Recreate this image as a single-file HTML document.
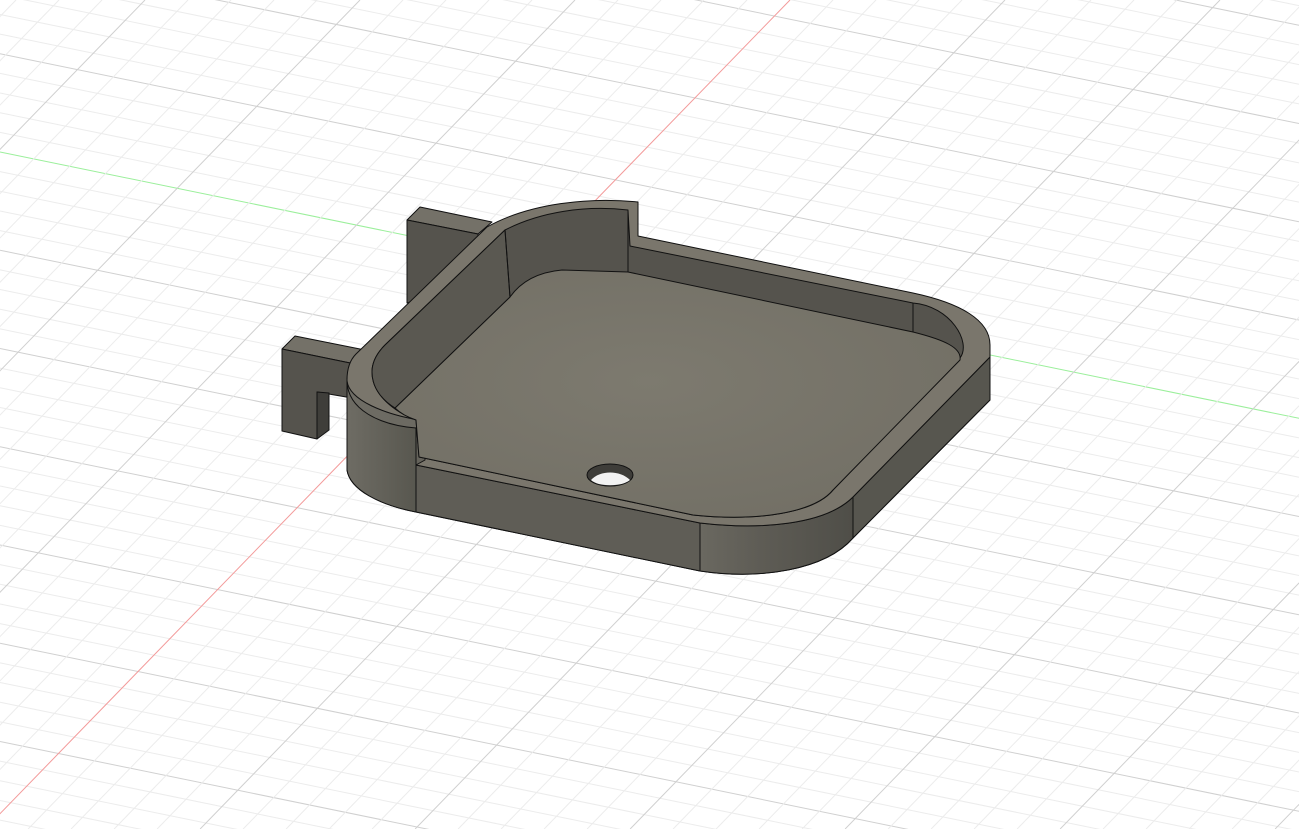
<!DOCTYPE html>
<html><head><meta charset="utf-8"><style>
html,body{margin:0;padding:0;background:#fff;width:1299px;height:829px;overflow:hidden}
svg{display:block;position:absolute;left:0;top:0}
</style></head><body>
<svg id="s" width="1299" height="829" viewBox="0 0 1299 829" xmlns="http://www.w3.org/2000/svg">
<defs>
<radialGradient id="fl" cx="0.45" cy="0.45" r="0.7">
<stop offset="0" stop-color="#7d7a6f"/><stop offset="1" stop-color="#716e64"/></radialGradient>
<linearGradient id="fw" x1="0" y1="0" x2="1" y2="0">
<stop offset="0" stop-color="#6e6c64"/><stop offset="1" stop-color="#58574f"/></linearGradient>
<linearGradient id="cw" x1="0" y1="0" x2="1" y2="0">
<stop offset="0" stop-color="#6a6860"/><stop offset="0.4" stop-color="#5e5c55"/><stop offset="1" stop-color="#4f4e48"/></linearGradient>
</defs>
<g id="grid"></g>
<g stroke="#111" stroke-width="1" stroke-linejoin="round">
<path d="M407,220 L420,207 L492,222 L478,234 Z" fill="#747168"/>
<path d="M407,220 L478,234 L478,260 L420,300 L407,303 Z" fill="#55534d"/>
<path d="M282,349 L295,336 L365,350 L355,364 Z" fill="#747168"/>
<path d="M282,349 L355,364 L352,398 L317,392 L317,439 L282,431 Z" fill="#55534d"/>
<path d="M317,392 L329,393 L329,430 L317,439 Z" fill="#3f3e3a"/>
<path d="M347,378 L347,470 C350,490 380,505 416,512 L700,571 C760,580 825,570 853,538 L990,400 L990,345 Z" fill="url(#fw)"/>
<path d="M416,465 L700,523 L700,571 L416,512 Z" fill="#5f5d56"/>
<path d="M700,523 C760,530 825,525 853,497 L853,538 C825,570 760,580 700,571 Z" fill="url(#cw)"/>
<path d="M853,497 L990,357 L990,400 L853,538 Z" fill="#57564f"/>
<path d="M347,380 C347,410 380,425 416,428 L416,512 C380,505 350,490 347,470 Z" fill="url(#fw)"/>
<path d="M347,380 C347,368 350,360 356,354 L487,227 C530,203 590,197 638,202 L638,236 L913,293 C960,303 990,320 990,345 L990,357 L853,497 C825,525 760,530 700,523 L416,465 L416,428 L425,421 C385,415 348,400 347,380 Z" fill="#7a766c"/>
<path d="M416,428 L425,421 L425,460 L416,465 Z" fill="#65635b"/>
<path d="M372,372 C372,395 395,412 416,420 L419,457 L693,515 C760,522 815,512 833,490 L960,358 C972,342 950,306 913,303 L630,246 L628,210 C585,205 540,212 505,230 L385,345 C377,353 372,362 372,372 Z" fill="#55534d"/>
<path d="M395,408 L510,297 C522,280 540,272 562,270 L628,272 L913,332 C945,340 962,348 960,360 L833,490 C815,512 760,522 693,515 L419,457 L416,420 C407,417 400,413 395,408 Z" fill="url(#fl)"/>
<path d="M372,372 C372,390 385,402 395,408 L510,297 L505,230 L385,345 C377,353 372,362 372,372 Z" fill="#5a5851"/>
<line x1="505" y1="230" x2="510" y2="297"/>
<line x1="628" y1="210" x2="628" y2="272"/>
<line x1="913" y1="303" x2="913" y2="332"/>
<line x1="700" y1="523" x2="700" y2="571"/>
<line x1="853" y1="497" x2="853" y2="538"/>
<line x1="990" y1="357" x2="990" y2="400"/>
<ellipse cx="610" cy="475" rx="23" ry="11" fill="#3e3d39"/>
<path d="M591,480 C600,470 620,470 630,480 C622,487 598,487 591,480 Z" fill="#f2f2f2" stroke="none"/>
</g>
</svg>
<script>
var g=document.getElementById('grid'),h='';
for(var k=-45;k<=45;k++){var y0=152+19.65*k;var maj=(k%5==0);
 var y1=y0+0.205*1299;
 var col=k==0?'#9bef9b':(maj?'#d0d0d0':'#ececec');
 h+='<line x1="0" y1="'+y0+'" x2="1299" y2="'+y1+'" stroke="'+col+'" stroke-width="1"/>';}
for(var k=-25;k<=45;k++){var x0=790+43*k;var maj=(k%5==0);
 var x1=x0-829/1.03;
 var col=k==0?'#f39a9a':(maj?'#d0d0d0':'#ececec');
 h+='<line x1="'+x0+'" y1="0" x2="'+x1+'" y2="829" stroke="'+col+'" stroke-width="1"/>';}
g.innerHTML=h;
</script>
</body></html>
